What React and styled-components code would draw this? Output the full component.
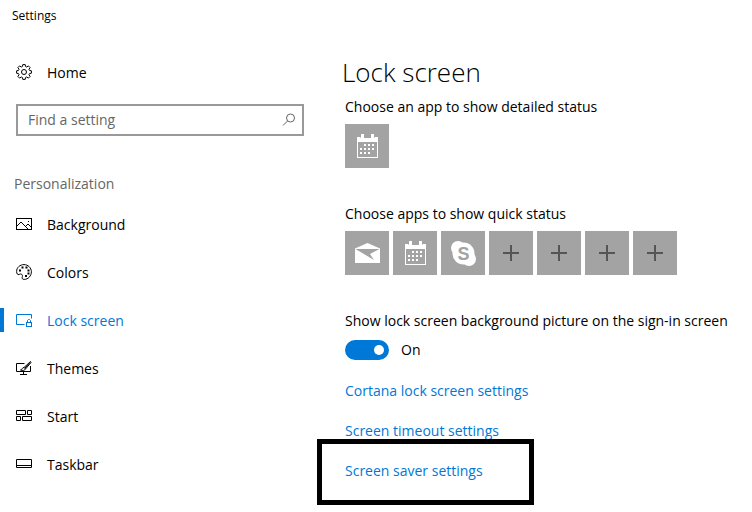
import { useState } from "react";
import styled, { createGlobalStyle } from "styled-components";

const GlobalStyle = createGlobalStyle`
	*,
	*::before,
	*::after {
		box-sizing: border-box;
	}

	body {
		margin: 0;
		background-color: #ffffff;
		color: #000000;
		font-family: "Open Sans", "Noto Sans", sans-serif;
		font-size: 14px;
		line-height: 24px;
	}
`;

const HomeIcon = () => (
    <Icon viewBox="0 0 16 16">
        <path d="M6.8 .6h2.4l.4 1.9 1.1.5 1.7-1.1 1.7 1.7L13 5.3l.5 1.1 1.9.4v2.4l-1.9.4-.5 1.1 1.1 1.7-1.7 1.7-1.7-1.1-1.1.5-.4 1.9H6.8l-.4-1.9-1.1-.5-1.7 1.1-1.7-1.7L3 10.7l-.5-1.1-1.9-.4V6.8l1.9-.4L3 5.3 1.9 3.6l1.7-1.7L5.3 3l1.1-.5z" />
        <circle cx="8" cy="8" r="2.5" />
    </Icon>
);

const BackgroundIcon = () => (
    <Icon viewBox="0 0 16 16">
        <rect x=".5" y="2.5" width="15" height="11" />
        <path d="M1 10l4-4 7.5 7.5M9.5 10.5L12 8l3.5 3.5" />
        <path d="M12 5.5h1" />
    </Icon>
);

const ColorsIcon = () => (
    <Icon viewBox="0 0 16 16">
        <path d="M.6 7.5C.6 3.5 4 .6 8 .6s7.4 3.2 7.4 7.2-3.2 7.6-7.2 7.6c-1.6 0-2.4-.8-2-2 .4-1.3.4-2.3-.4-3-.9-.8-1.8-.3-2.8.1C1.6 11 .6 9.6.6 7.5z" />
        <path d="M3 6.5h2M5.5 3.5h2M9.5 3.5h2M11.5 6.5h2M11.5 9.5h2M9 12h2" strokeWidth="2" />
    </Icon>
);

const LockScreenIcon = () => (
    <Icon viewBox="0 0 16 16">
        <path d="M8.5 12.5h-8v-10h15v4M4 12.5h4" />
        <rect x="10.5" y="10.5" width="5" height="4" />
        <path d="M11.5 10.5v-2l1-1h1l1 1v2" />
    </Icon>
);

const ThemesIcon = () => (
    <Icon viewBox="0 0 16 16">
        <path d="M8.5 3.5h-8v8h14V6M7.5 11.5v3M4 14.5h7" />
        <path d="M14.5 1.5L8 7.5 9.5 9 15 2.5zM8 7.5c-2 0-1.5 2-3.5 2.5 2 .8 4.5.5 5-1" />
        <path d="M14 2.5L9 8" />
    </Icon>
);

const StartIcon = () => (
    <Icon viewBox="0 0 16 16">
        <path d="M.5 2.5h9v4h-9zM11.5 2.5h4v4h-4zM.5 8.5h4v4h-4zM6.5 8.5h9v4h-9z" />
    </Icon>
);

const TaskbarIcon = () => (
    <Icon viewBox="0 0 16 16">
        <path d="M.5 3.5h15v8H.5zM.5 9.5h15" />
    </Icon>
);

const SearchIcon = () => (
    <Icon viewBox="0 0 16 16">
        <circle cx="9.5" cy="6" r="4" />
        <path d="M6.5 9L2 13.5" />
    </Icon>
);

const CalendarIcon = () => (
    <TileIcon viewBox="0 0 44 44">
        <path d="M12 13h3l1 1v-4h3v4h7v-4h3v4l1-1h3v21H12zM13 18v15h19V18z" fillRule="evenodd" />
        <path d="M19 20h2v2h-2zM23 20h2v2h-2zM27 20h2v2h-2zM15 24h2v2h-2zM19 24h2v2h-2zM23 24h2v2h-2zM27 24h2v2h-2zM15 28h2v2h-2zM19 28h2v2h-2zM23 28h2v2h-2z" />
    </TileIcon>
);

const MailIcon = () => (
    <TileIcon viewBox="0 0 44 44">
        <path d="M10 17.5L22.5 12 35 17.5V32H10z" />
        <path d="M10.5 18h24l-9.5 5 4 6z" fill="#a3a3a3" />
    </TileIcon>
);

const SkypeIcon = () => (
    <TileIcon viewBox="0 0 44 44">
        <circle cx="17" cy="17" r="7" />
        <circle cx="28" cy="28" r="7" />
        <circle cx="22.5" cy="22.5" r="11" />
        <text x="22.5" y="29" textAnchor="middle">S</text>
    </TileIcon>
);

const PlusIcon = () => (
    <TileIcon viewBox="0 0 44 44">
        <path d="M14 21h16v2H14zM21 14h2v16h-2z" fill="#555555" />
    </TileIcon>
);

const navItems = [
    { name: "Background", icon: BackgroundIcon },
    { name: "Colors", icon: ColorsIcon },
    { name: "Lock screen", icon: LockScreenIcon },
    { name: "Themes", icon: ThemesIcon },
    { name: "Start", icon: StartIcon },
    { name: "Taskbar", icon: TaskbarIcon },
];

const quickApps = [
    { name: "Mail", icon: MailIcon },
    { name: "Calendar", icon: CalendarIcon },
    { name: "Skype", icon: SkypeIcon },
    { name: "Add app 4", icon: PlusIcon },
    { name: "Add app 5", icon: PlusIcon },
    { name: "Add app 6", icon: PlusIcon },
    { name: "Add app 7", icon: PlusIcon },
];

const App = () => {
    const [page, setPage] = useState("Lock screen");
    const [search, setSearch] = useState("");
    const [showPicture, setShowPicture] = useState(true);

    return (
        <>
            <GlobalStyle />
            <TitleBar>Settings</TitleBar>
            <Layout>
                <Sidebar>
                    <NavButton type="button">
                        <Marker />
                        <HomeIcon />
                        <NavText>Home</NavText>
                    </NavButton>
                    <SearchBox>
                        <SearchInput
                            type="text"
                            placeholder="Find a setting"
                            aria-label="Find a setting"
                            value={search}
                            onChange={(e) => setSearch(e.target.value)}
                        />
                        <SearchIcon />
                    </SearchBox>
                    <Category>Personalization</Category>
                    {navItems.map(({ name, icon: ItemIcon }) => (
                        <NavButton
                            key={name}
                            type="button"
                            $active={page === name}
                            onClick={() => setPage(name)}
                        >
                            <Marker $active={page === name} />
                            <ItemIcon />
                            <NavText>{name}</NavText>
                        </NavButton>
                    ))}
                </Sidebar>
                <Main>
                    <Title>Lock screen</Title>
                    <Section>
                        <Label>Choose an app to show detailed status</Label>
                        <Tiles>
                            <Tile type="button" aria-label="Calendar">
                                <CalendarIcon />
                            </Tile>
                        </Tiles>
                    </Section>
                    <Section>
                        <Label>Choose apps to show quick status</Label>
                        <Tiles>
                            {quickApps.map(({ name, icon: AppIcon }) => (
                                <Tile key={name} type="button" aria-label={name}>
                                    <AppIcon />
                                </Tile>
                            ))}
                        </Tiles>
                    </Section>
                    <Section>
                        <Label as="label" htmlFor="show-picture">
                            Show lock screen background picture on the sign-in screen
                        </Label>
                        <ToggleRow>
                            <Toggle
                                id="show-picture"
                                type="checkbox"
                                checked={showPicture}
                                onChange={(e) => setShowPicture(e.target.checked)}
                            />
                            {showPicture ? "On" : "Off"}
                        </ToggleRow>
                        <Links>
                            <LinkItem><Link href="#cortana">Cortana lock screen settings</Link></LinkItem>
                            <LinkItem><Link href="#timeout">Screen timeout settings</Link></LinkItem>
                            <LinkItem $marked><Link href="#saver">Screen saver settings</Link></LinkItem>
                        </Links>
                    </Section>
                </Main>
            </Layout>
        </>
    );
};

const TitleBar = styled.header`
	padding: 4px 12px;
	font-size: 12px;
`;

const Layout = styled.div`
	display: grid;
	grid-template-columns: 304px 1fr;
	column-gap: 38px;
`;

const Sidebar = styled.nav`
	display: flex;
	flex-direction: column;
	padding-top: 16px;
`;

const Icon = styled.svg`
	width: 16px;
	height: 16px;
	flex-shrink: 0;
	fill: none;
	stroke: currentColor;
`;

const NavButton = styled.button`
	display: flex;
	align-items: center;
	height: 48px;
	padding: 0;
	border: none;
	background: none;
	font: inherit;
	color: ${({ $active }) => ($active ? "#0078d7" : "#000000")};
	text-align: left;
	cursor: pointer;

	${Icon} {
		margin: 0 15px 0 12px;
	}
`;

const NavText = styled.span`
	padding-top: 2px;
`;

const Marker = styled.span`
	width: 4px;
	height: 24px;
	background-color: ${({ $active }) => ($active ? "#0078d7" : "transparent")};
`;

const SearchBox = styled.div`
	display: flex;
	align-items: center;
	height: 32px;
	margin: 8px 0 0 16px;
	padding: 0 5px 0 10px;
	border: 2px solid #999999;
	color: #666666;
`;

const SearchInput = styled.input`
	flex: 1;
	min-width: 0;
	padding: 0;
	border: none;
	outline: none;
	background: none;
	font: inherit;

	&::placeholder {
		color: #666666;
		opacity: 1;
	}
`;

const Category = styled.h2`
	margin: 36px 0 4px 14px;
	font-size: 14px;
	font-weight: 400;
	color: #666666;
`;

const Main = styled.main`
	padding-top: 20px;
`;

const Title = styled.h1`
	margin: 0;
	font-size: 26px;
	font-weight: 300;
	line-height: 40px;
`;

const Section = styled.section`
	padding: 3px 0 31px 3px;

	&:last-child {
		padding-bottom: 16px;
	}
`;

const Label = styled.div`
	display: block;
`;

const Tiles = styled.div`
	display: flex;
	flex-wrap: wrap;
	gap: 4px;
	margin-top: 5px;
`;

const Tile = styled.button`
	width: 44px;
	height: 44px;
	padding: 0;
	border: none;
	background-color: #a3a3a3;
	cursor: pointer;
`;

const TileIcon = styled.svg`
	display: block;
	width: 44px;
	height: 44px;
	fill: #ffffff;

	text {
		fill: #a3a3a3;
		font-family: "Liberation Sans", sans-serif;
		font-size: 18px;
		font-weight: 700;
	}
`;

const ToggleRow = styled.div`
	display: flex;
	align-items: center;
	gap: 12px;
	margin-top: 5px;
`;

const Toggle = styled.input`
	appearance: none;
	display: flex;
	align-items: center;
	justify-content: ${({ checked }) => (checked ? "flex-end" : "flex-start")};
	width: 44px;
	height: 20px;
	margin: 0;
	padding: 0 5px;
	border-radius: 10px;
	background-color: ${({ checked }) => (checked ? "#0078d7" : "#999999")};
	cursor: pointer;

	&::before {
		content: "";
		width: 10px;
		height: 10px;
		border-radius: 50%;
		background-color: #ffffff;
	}
`;

const Links = styled.ul`
	margin: 9px 0 0;
	padding: 0;
	list-style: none;
`;

const LinkItem = styled.li`
	position: relative;
	padding: 8px 0;

	/* frame drawn over the link that is pointed out */
	&::after {
		content: "";
		display: ${({ $marked }) => ($marked ? "block" : "none")};
		position: absolute;
		top: -12px;
		left: -28px;
		width: 217px;
		height: 66px;
		border: 5px solid #000000;
		pointer-events: none;
	}
`;

const Link = styled.a`
	color: #0078d7;
	text-decoration: none;
`;

export default App;
